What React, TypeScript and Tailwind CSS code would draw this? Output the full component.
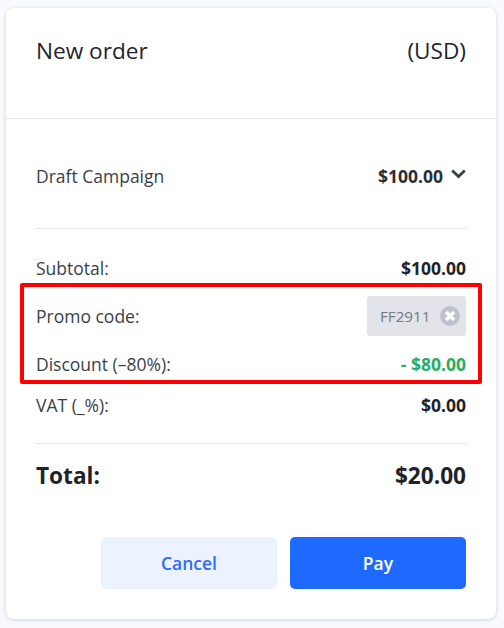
import React from "react";

function Row({ label, value, cls = "text-[#1f2329]" }: { label: string; value: string; cls?: string }) {
  return (
    <div className="flex items-center justify-between h-6">
      <span className="text-[#3a3f47]">{label}</span>
      <span className={`font-bold ${cls}`}>{value}</span>
    </div>
  );
}

export default function App() {
  return (
    <div className="w-[504px] h-[628px] bg-[#f9fafd] pt-2 pl-[6px] text-[17.5px] font-['Open_Sans',sans-serif]">
      <div className="relative w-[490px] h-[611px] bg-white rounded-lg shadow-[0_1px_4px_rgba(30,40,70,0.18)]">
        <header className="h-[111px] border-b border-[#e3e5e8] px-[30px] pt-[25px] flex justify-between text-[22.6px] leading-[36px] text-[#1d2530]">
          <span>New order</span>
          <span>(USD)</span>
        </header>
        <div className="px-[30px]">
          <div className="h-[110px] border-b border-[#e3e5e8] pt-[5px] flex items-center justify-between">
            <span className="text-[#3a3f47]">Draft Campaign</span>
            <span className="flex items-center gap-2 font-bold text-[#2a2e35]">
              $100.00
              <svg width="15" height="10" viewBox="0 0 15 10" className="-mt-1" fill="none">
                <path d="M1.2 1.5 7.5 7.5 13.8 1.5" stroke="#3c3f44" strokeWidth="2.8" />
              </svg>
            </span>
          </div>
          <div className="pt-[27px]">
            <Row label="Subtotal:" value="$100.00" />
            <div className="mt-[16px] flex items-center justify-between h-10">
              <span className="text-[#3a3f47]">Promo code:</span>
              <div className="w-[99px] h-10 bg-[#e2e4e9] rounded-[3px] flex items-center justify-between pl-[13px] pr-[6px]">
                <span className="text-[15.2px] text-[#777a80]">FF2911</span>
                <svg width="20" height="20" viewBox="0 0 20 20">
                  <circle cx="10" cy="10" r="10" fill="#bfc2cc" />
                  <path d="M6 6 14 14M14 6 6 14" stroke="#fff" strokeWidth="3.4" />
                </svg>
              </div>
            </div>
            <div className="mt-[16px]">
              <Row label="Discount (–80%):" value="- $80.00" cls="text-[#27ae60]" />
            </div>
            <div className="mt-[17px]">
              <Row label="VAT (_%):" value="$0.00" />
            </div>
          </div>
          <div className="mt-[26px] border-t border-[#e3e5e8] pt-[16px] flex items-center justify-between text-[22.6px] leading-[32px] font-bold text-[#1f2329]">
            <span>Total:</span>
            <span>$20.00</span>
          </div>
          <div className="mt-[45px] flex justify-end gap-[13px]">
            <button className="w-[176px] h-[52px] rounded-[5px] bg-[#edf3fe] text-[#2f6bff] font-semibold">Cancel</button>
            <button className="w-[176px] h-[52px] rounded-[5px] bg-[#1e69ff] text-white font-semibold">Pay</button>
          </div>
        </div>
        <div className="absolute left-[14px] top-[275px] w-[462px] h-[101px] border-4 border-[#ff0000] rounded-[2px]" />
      </div>
    </div>
  );
}
